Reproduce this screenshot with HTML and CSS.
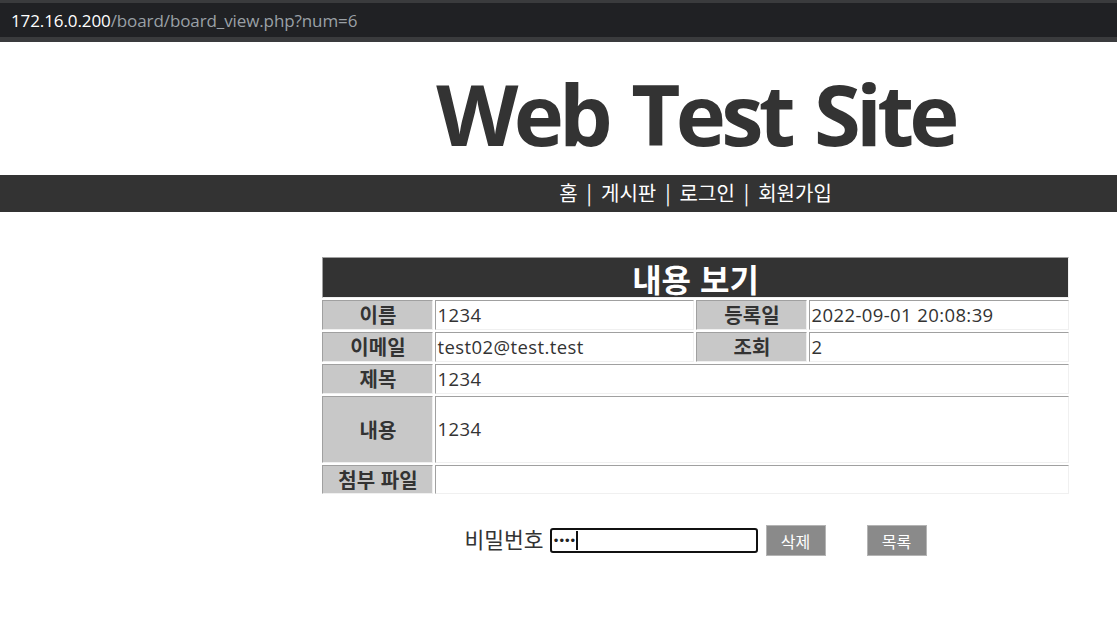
FILE: index.html
```html
<!DOCTYPE html>
<html lang="ko">
<head>
<meta charset="utf-8">
<title>Web Test Site - 내용 보기</title>
<link rel="stylesheet" href="styles.css">
</head>
<body>
<div class="urlbar"><span class="host">172.16.0.200</span><span class="path">/board/board_view.php?num=6</span></div>

<header class="site-head">
  <h1 class="site-title">Web Test Site</h1>
</header>

<nav class="gnb">
  <div class="gnb-inner">
    <a class="gnb-link" href="#">홈</a><span class="sep">|</span><a class="gnb-link" href="#">게시판</a><span class="sep">|</span><a class="gnb-link" href="#">로그인</a><span class="sep">|</span><a class="gnb-link" href="#">회원가입</a>
  </div>
</nav>

<main class="content">
  <table class="view">
    <colgroup>
      <col class="c-label"><col class="c-value"><col class="c-label"><col class="c-value">
    </colgroup>
    <tr class="r-head"><th colspan="4" class="head-cell">내용 보기</th></tr>
    <tr class="r-std">
      <th class="lbl">이름</th><td class="val">1234</td>
      <th class="lbl">등록일</th><td class="val">2022-09-01 20:08:39</td>
    </tr>
    <tr class="r-std">
      <th class="lbl">이메일</th><td class="val">test02@test.test</td>
      <th class="lbl">조회</th><td class="val">2</td>
    </tr>
    <tr class="r-std">
      <th class="lbl">제목</th><td class="val" colspan="3">1234</td>
    </tr>
    <tr class="r-body">
      <th class="lbl">내용</th><td class="val" colspan="3">1234</td>
    </tr>
    <tr class="r-file">
      <th class="lbl">첨부 파일</th><td class="val" colspan="3"></td>
    </tr>
  </table>

  <form class="del-form" action="#">
    <label class="pw-label" for="pw">비밀번호</label>
    <span class="pw-wrap"><input class="pw-input" id="pw" type="password" value="1234"><span class="caret"></span></span>
    <button class="btn" type="button">삭제</button>
    <button class="btn btn-list" type="button">목록</button>
  </form>
</main>
</body>
</html>
```

FILE: styles.css
```css
html, body {
  margin: 0;
  padding: 0;
  background: #ffffff;
}

body {
  font-family: "Open Sans", "Noto Sans CJK KR", sans-serif;
  color: #333333;
}

/* browser address strip */
.urlbar {
  height: 34px;
  border-top: 3px solid #3a3b3d;
  border-bottom: 5px solid #3a3b3d;
  background: #202124;
  padding-left: 11px;
  display: flex;
  align-items: center;
  font-family: "Open Sans", sans-serif;
  font-size: 17px;
  letter-spacing: -0.1px;
}
.host { color: #ffffff; }
.path { color: #9aa0a6; }

/* site header */
.site-head {
  padding-left: 274px;
  height: 133px;
  display: flex;
  justify-content: center;
}
.site-title {
  margin: 0;
  font-family: "Open Sans", sans-serif;
  font-weight: 700;
  font-size: 85px;
  letter-spacing: -4.8px;
  word-spacing: 6px;
  line-height: 133px;
  padding-top: 5px;
  color: #333333;
}

/* top navigation */
.gnb {
  background: #333333;
  height: 37px;
}
.gnb-inner {
  padding-left: 274px;
  height: 35px;
  display: flex;
  justify-content: center;
  align-items: center;
  font-family: "Noto Sans CJK KR", sans-serif;
  font-size: 20px;
  color: #ffffff;
}
.gnb-link {
  color: #ffffff;
  text-decoration: none;
}
.sep {
  margin: 0 9px;
}

/* content */
.content {
  padding-left: 274px;
  display: flex;
  flex-direction: column;
  align-items: center;
}

.view {
  margin-top: 43px;
  width: 750px;
  table-layout: fixed;
  border-collapse: separate;
  border-spacing: 2px;
}
.c-label { width: 111px; }
.c-value { width: 259px; }

.view th,
.view td {
  box-sizing: border-box;
  padding: 0;
  border: 1px solid;
  border-color: #a0a0a0 #f0f0f0 #f0f0f0 #a0a0a0;
}

.head-cell {
  height: 41px;
  background: #333333;
  color: #ffffff;
  font-family: "Noto Sans CJK KR", sans-serif;
  font-size: 32px;
  font-weight: 700;
  text-align: center;
  line-height: 1;
}

.r-std th, .r-std td { height: 30px; }
.r-body th, .r-body td { height: 67px; }
.r-file th, .r-file td { height: 29px; }

.lbl {
  background: #c8c8c8;
  color: #333333;
  font-family: "Noto Sans CJK KR", sans-serif;
  font-size: 20px;
  font-weight: 700;
  text-align: center;
  line-height: 1;
}

.val {
  background: #ffffff;
  color: #333333;
  font-family: "Open Sans", "Noto Sans CJK KR", sans-serif;
  font-size: 18.5px;
  letter-spacing: 0.4px;
  text-align: left;
  padding-left: 1px !important;
  line-height: 1;
}

/* delete form */
.del-form {
  margin: 29px 0 0 0;
  display: flex;
  align-items: center;
}
.pw-label {
  font-family: "Noto Sans CJK KR", sans-serif;
  font-size: 21.5px;
  color: #333333;
  margin-right: 6px;
  position: relative;
  top: -2px;
}
.pw-wrap {
  position: relative;
  display: inline-block;
}
.pw-input {
  box-sizing: border-box;
  width: 208px;
  height: 25px;
  border: 2px solid #111111;
  border-radius: 3px;
  padding: 0 0 0 1px;
  font-family: "DejaVu Sans", sans-serif;
  font-size: 12px;
  letter-spacing: -1.5px;
  color: #222222;
  outline: none;
  display: block;
}
.caret {
  position: absolute;
  left: 26px;
  top: 3px;
  width: 2px;
  height: 19px;
  background: #111111;
}
.btn {
  box-sizing: border-box;
  width: 60px;
  height: 31px;
  margin-left: 8px;
  background: #8a8a8a;
  border: 1px solid #b4b4b4;
  color: #ffffff;
  font-family: "Noto Sans CJK KR", sans-serif;
  font-size: 16px;
  padding: 0;
}
.btn-list {
  margin-left: 41px;
}
```
